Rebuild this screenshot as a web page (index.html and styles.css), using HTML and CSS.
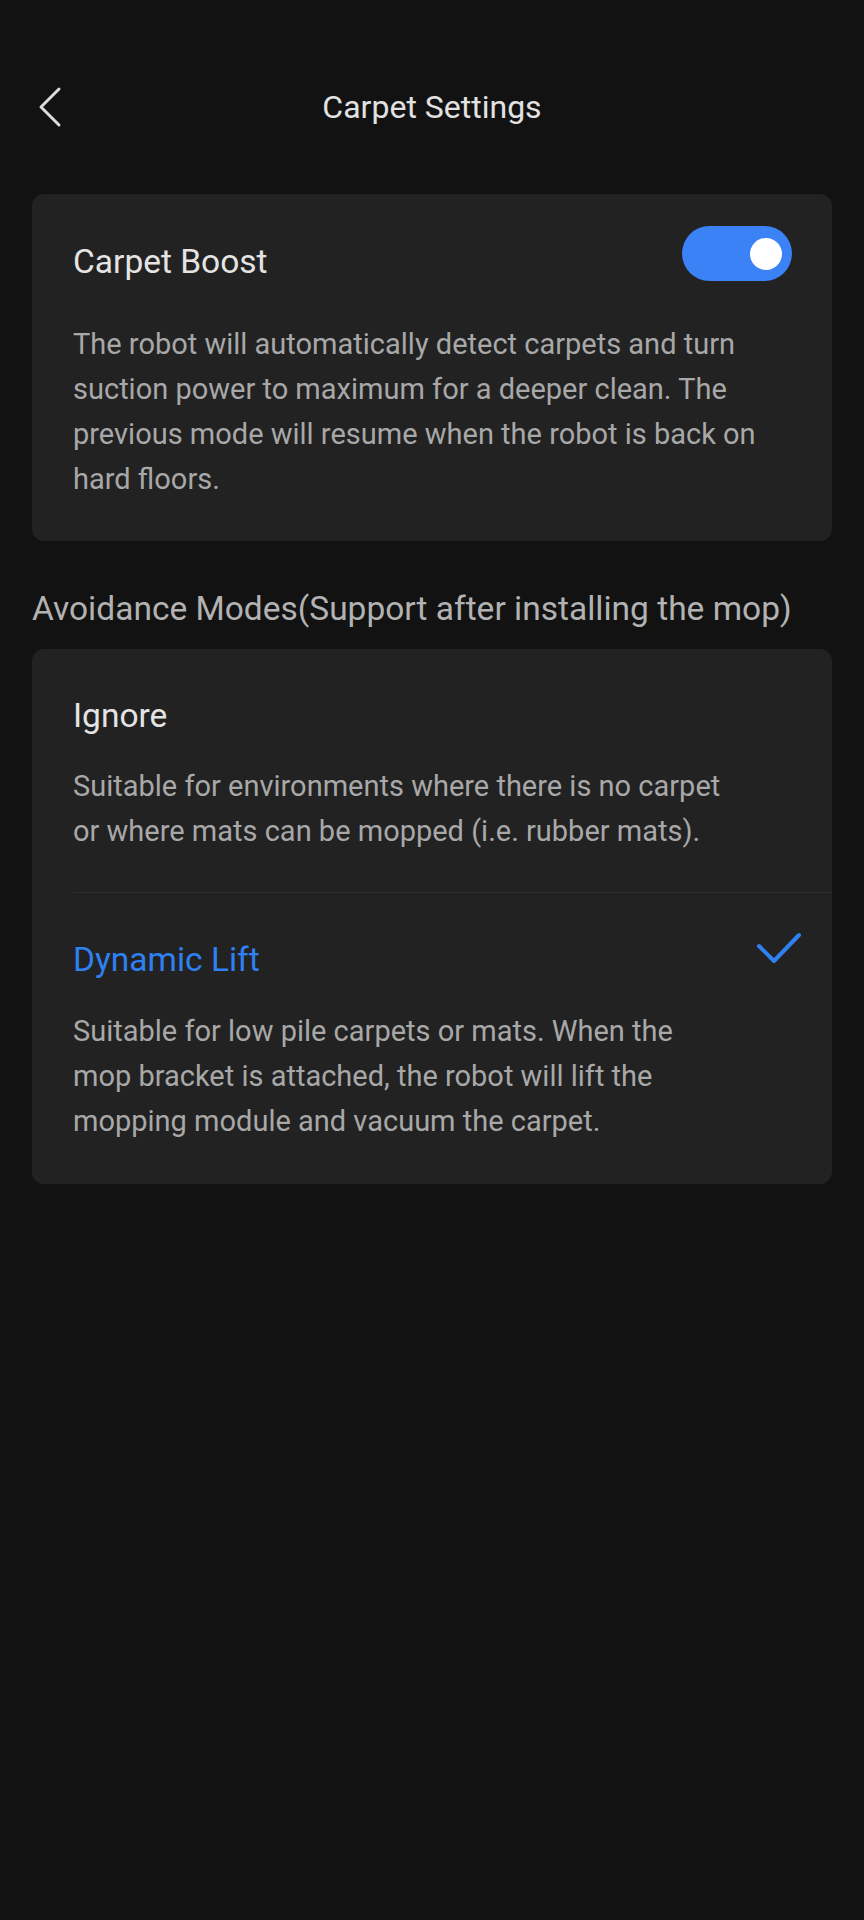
FILE: index.html
```html
<!DOCTYPE html>
<html lang="en">
  <head>
    <meta charset="UTF-8" />
    <meta name="viewport" content="width=device-width, initial-scale=1.0" />
    <title>Carpet Settings</title>

    <link rel="stylesheet" href="styles.css">
  </head>
  <body>
    <div class="header">
      <div class="back">
        <svg width="26" height="42" viewBox="0 0 26 42">
          <polyline points="22,3 4,21 22,39" fill="none" stroke="#dcdcdc" stroke-width="3" stroke-linecap="round" stroke-linejoin="round" />
        </svg>
      </div>
      <h1>Carpet Settings</h1>
      <div></div>
    </div>

    <div class="card boost">
      <div class="boost-row">
        <span class="item-title">Carpet Boost</span>
        <div class="toggle on"><span class="knob"></span></div>
      </div>
      <p class="desc">The robot will automatically detect carpets and turn suction power to maximum for a deeper clean. The previous mode will resume when the robot is back on hard floors.</p>
    </div>

    <div class="section-label">Avoidance Modes(Support after installing the mop)</div>

    <div class="card options">
      <div class="option">
        <div class="option-row">
          <span class="item-title">Ignore</span>
        </div>
        <p class="desc option-desc">Suitable for environments where there is no carpet or where mats can be mopped (i.e. rubber mats).</p>
      </div>
      <div class="option selected">
        <div class="option-row">
          <span class="item-title">Dynamic Lift</span>
          <svg class="check" width="46" height="32" viewBox="0 0 46 32">
            <polyline points="3,14 18,29 43,3" fill="none" stroke="#2f80f0" stroke-width="4" stroke-linecap="round" stroke-linejoin="round" />
          </svg>
        </div>
        <p class="desc option-desc">Suitable for low pile carpets or mats. When the mop bracket is attached, the robot will lift the mopping module and vacuum the carpet.</p>
      </div>
    </div>
  </body>
</html>
```

FILE: styles.css
```css
body {
  margin: 0;
  min-height: 1920px;
  background-color: #121212;
  font-family: Roboto, "Noto Sans", sans-serif;
  color: #e4e4e4;
}

.header {
  display: grid;
  grid-template-columns: 1fr auto 1fr;
  align-items: center;
  height: 44px;
  padding: 85px 0 0;
}

.back {
  display: flex;
  align-items: center;
  padding-left: 37px;
}

.header h1 {
  margin: 0;
  font-size: 32px;
  font-weight: 400;
  line-height: 44px;
  color: #e2e2e2;
}

.card {
  margin: 0 32px;
  background: #222222;
  border-radius: 12px;
}

.boost {
  margin-top: 65px;
  padding: 32px 40px 39px 41px;
}

.boost-row {
  display: flex;
  justify-content: space-between;
  align-items: flex-start;
}

.item-title {
  display: block;
  font-size: 33.5px;
  line-height: 44px;
  margin-top: 14px;
}

.toggle {
  width: 110px;
  height: 55px;
  border-radius: 28px;
  background: #3b82f6;
  display: flex;
  align-items: center;
  justify-content: flex-end;
  padding-right: 10px;
  box-sizing: border-box;
}

.knob {
  width: 32px;
  height: 32px;
  border-radius: 50%;
  background: #ffffff;
}

.desc {
  margin: 38px 0 0;
  font-size: 29px;
  line-height: 45px;
  color: #a8a8a8;
}

.section-label {
  margin: 46px 32px 18px;
  font-size: 33.5px;
  line-height: 44px;
  color: #b2b2b2;
}

.option {
  margin-left: 41px;
  padding: 45px 30px 38px 0;
}

.option + .option {
  border-top: 1px solid #2e2e2e;
  padding-bottom: 40px;
}

.option-row {
  display: flex;
  justify-content: space-between;
  align-items: flex-start;
}

.option-row .item-title {
  margin-top: 0;
}

.selected .item-title {
  color: #2f80f0;
}

.check {
  margin-top: -6px;
}

.option-desc {
  margin-top: 26px;
  max-width: 656px;
}

.selected .option-desc {
  margin-top: 27px;
}
```
